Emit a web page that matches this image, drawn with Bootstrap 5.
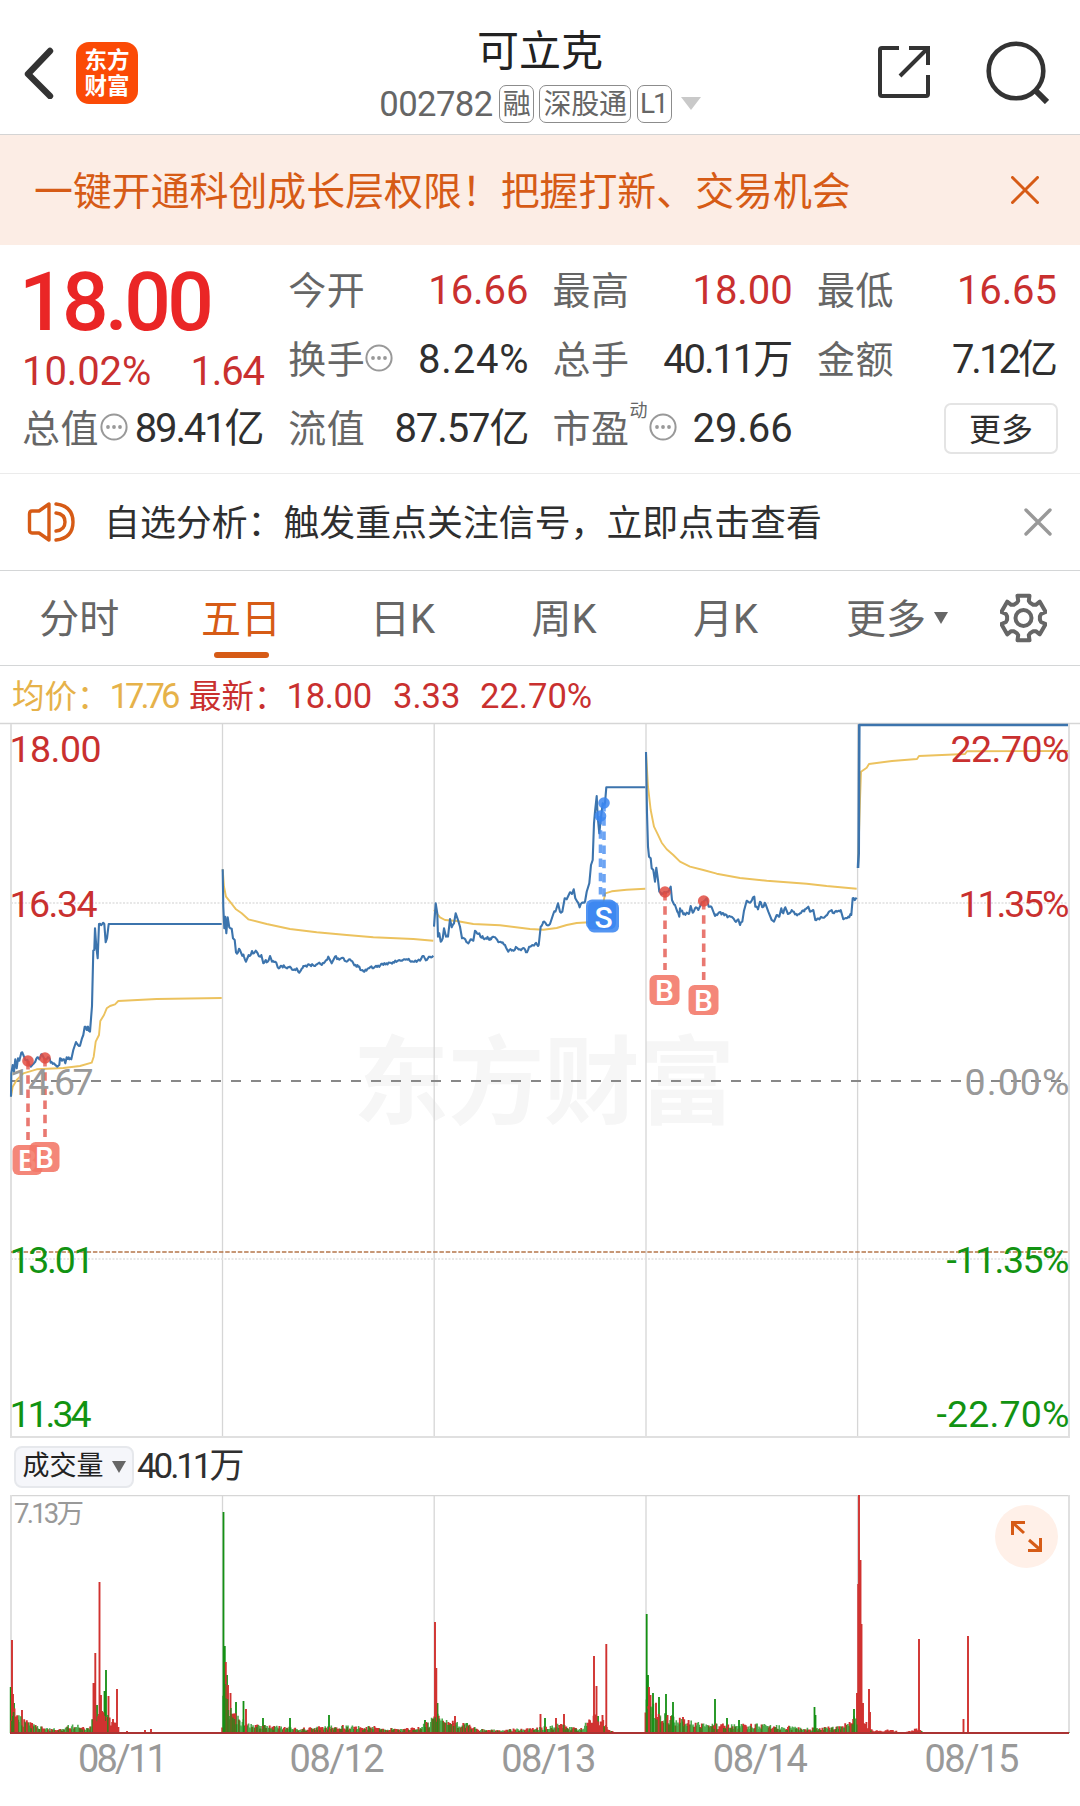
<!DOCTYPE html>
<html lang="zh-CN">
<head>
<meta charset="utf-8">
<meta name="viewport" content="width=device-width, initial-scale=1">
<title>可立克 002782</title>
<link href="https://cdn.jsdelivr.net/npm/bootstrap@5.3.0/dist/css/bootstrap.min.css" rel="stylesheet">
<style>
:root{--ink:#2f2f2f;--grey:#666;--up:#c9302f;--down:#1f8f1c;--brand:#d65b16}
body{width:1080px;height:1806px;overflow:hidden;background:#fff;color:var(--ink);font-family:Roboto,"Noto Sans CJK SC",sans-serif;line-height:1;-webkit-font-smoothing:antialiased}
svg{display:block;flex:none}
.t-nowrap,.t-nowrap *{white-space:nowrap}
.top-bar{height:135px;border-bottom:1px solid #d4d4d4;padding:0 31px 0 23px}
.side{width:250px}
.logo-tile{width:62px;height:62px;border-radius:13px;background:#fb4a06;color:#fff;font-weight:700;font-size:22.5px;line-height:26px;margin-left:22px}
.stock-name{font-size:42px;color:#222;line-height:50px;margin-top:27px}
.stock-code{font-size:34.7px;color:var(--grey);letter-spacing:-.6px;height:38px;margin-top:8px;gap:6px}
.tag-box{height:38px;border:1.5px solid #8c8c8c;border-radius:7px;font-size:28px;letter-spacing:-.2px;padding:1px 3px 0;color:var(--grey)}
.tag-box.tag-l1{letter-spacing:-2px;padding:0 4px 0 2px}
.promo{height:110px;background:#fcede5;color:var(--brand);font-size:38.9px;padding:0 41px 0 34px}
.cn-drop{padding-top:4px}
.quote{height:229px;border-bottom:1px solid #ebebeb;padding:11px 24px 0;display:grid;grid-template-columns:repeat(4,240px);grid-template-rows:repeat(3,69px);column-gap:24.3px;font-size:40px}
.head-price{grid-row:1/3}
.col-start{margin-left:-2px}
.big-price{font-size:82px;font-weight:500;color:#ea2626;letter-spacing:-3.6px;line-height:88px;margin-top:2px;margin-left:-5px}
.quote .lbl{font-size:38px;color:var(--grey);letter-spacing:.5px}
.val{letter-spacing:-.1px}
.val.tight1{letter-spacing:-1.1px}
.val.tight2{letter-spacing:-2.1px;margin-right:1.5px}
.val.tight3{letter-spacing:-3px;margin-right:2px}
.val.loose{letter-spacing:.8px;margin-right:-1px}
.up{color:var(--up)}
.sup-note{font-size:18px;align-self:flex-start;margin-top:-8px;color:var(--grey)}
.more-btn{width:114px;height:51px;border:2px solid #e4e4e4;border-radius:7px;font-size:32px;color:var(--ink);padding-top:2px;margin-right:-1px}
.notice{height:97px;border-bottom:1px solid #d4d6d7;font-size:35.9px;padding:0 28px 0 27px}
.period{height:95px;border-bottom:1px solid #d4d6d7;font-size:40px;color:var(--grey);padding:0 33px 0 0}
.period .nav-item{width:161.6px;height:95px;position:relative;padding:4px 3px 0 0}
.period .on{color:var(--brand)}
.period .on::after{content:"";position:absolute;left:52px;bottom:8px;width:55px;height:6px;border-radius:3px;background:var(--brand)}
.legend-row{height:56px;font-size:34.6px;padding:4px 0 0 12px}
.legend-row .cn{font-size:32.5px}
.vol-head{height:57px;padding-left:14px;font-size:35px}
.vol-pill{width:120px;height:42px;border:2px solid #e6e8ec;border-radius:8px;background:#f5f6fa;font-size:27px;color:#222}
.dates{height:50px;padding:0 11px;font-size:38px;color:#999}
.dates div{width:211.6px;padding-left:67px;letter-spacing:-1.5px}
.dates div:first-child{letter-spacing:-2.8px}
</style>
</head>
<body class="t-nowrap">
<header class="top-bar d-flex justify-content-between">
  <div class="side d-flex align-items-center" style="padding-top:11px">
    <svg width="31" height="52" viewBox="0 0 31 52" fill="none" stroke="#333" stroke-width="6.4" stroke-linecap="round" stroke-linejoin="round"><path d="M27 4 5 27 27 49"/></svg>
    <div class="logo-tile d-flex flex-column align-items-center justify-content-center"><span>东方</span><span>财富</span></div>
  </div>
  <div class="d-flex flex-column align-items-center" style="padding-left:8px">
    <div class="stock-name">可立克</div>
    <div class="stock-code d-flex align-items-center"><span>002782</span><span class="tag-box d-flex align-items-center">融</span><span class="tag-box d-flex align-items-center" style="margin-left:-1px">深股通</span><span class="tag-box tag-l1 d-flex align-items-center">L1</span>
      <svg style="margin-left:3px" width="20" height="14"><path d="M0 0H20L10 13z" fill="#c9c9c9"/></svg></div>
  </div>
  <div class="side d-flex align-items-center justify-content-end" style="padding-top:10px">
    <svg width="54" height="54" viewBox="0 0 54 54" fill="none" stroke="#333" stroke-width="4"><path d="M22 3H5Q3 3 3 5V49Q3 51 5 51H49Q51 51 51 49V30M32 3H51V20M51 3 23 31"/></svg>
    <svg style="margin-left:55px" width="63" height="63" viewBox="0 0 63 63" fill="none" stroke="#333" stroke-width="4.6"><circle cx="30" cy="30" r="27.3"/><path d="M49 49 61 61" stroke-width="6"/></svg>
  </div>
</header>

<section class="promo d-flex align-items-center justify-content-between">
  <span class="cn-drop">一键开通科创成长层权限！把握打新、交易机会</span>
  <svg width="28" height="28" stroke="#d65b16" stroke-width="3" stroke-linecap="round"><path d="M1.5 1.5 26.5 26.5M26.5 1.5 1.5 26.5"/></svg>
</section>

<section class="quote">
  <div class="head-price">
    <div class="big-price">18.00</div>
    <div class="d-flex justify-content-between up col-start" style="margin-top:6px"><span class="val">10.02%</span><span class="val tight1">1.64</span></div>
  </div>
  <div class="d-flex align-items-center justify-content-between"><span class="lbl">今开</span><span class="val up">16.66</span></div>
  <div class="d-flex align-items-center justify-content-between"><span class="lbl">最高</span><span class="val up">18.00</span></div>
  <div class="d-flex align-items-center justify-content-between"><span class="lbl">最低</span><span class="val up">16.65</span></div>
  <div class="d-flex align-items-center justify-content-between"><span class="d-flex align-items-center"><span class="lbl">换手</span><svg width="28" height="28" class="mb-1"><use href="#dots"/></svg></span><span class="val loose">8.24%</span></div>
  <div class="d-flex align-items-center justify-content-between"><span class="lbl">总手</span><span class="val tight2">40.11万</span></div>
  <div class="d-flex align-items-center justify-content-between"><span class="lbl">金额</span><span class="val tight3">7.12亿</span></div>
  <div class="d-flex align-items-center justify-content-between col-start"><span class="d-flex align-items-center"><span class="lbl">总值</span><svg width="28" height="28" class="mb-1" style="margin-left:1px"><use href="#dots"/></svg></span><span class="val tight2">89.41亿</span></div>
  <div class="d-flex align-items-center justify-content-between"><span class="lbl">流值</span><span class="val tight1">87.57亿</span></div>
  <div class="d-flex align-items-center justify-content-between"><span class="d-flex align-items-center"><span class="lbl">市盈</span><span class="sup-note">动</span><svg width="28" height="28" class="mb-1" style="margin-left:1px"><use href="#dots"/></svg></span><span class="val">29.66</span></div>
  <div class="d-flex align-items-center justify-content-end"><div class="more-btn d-flex align-items-center justify-content-center">更多</div></div>
</section>

<section class="notice d-flex align-items-center">
  <svg width="48" height="42" viewBox="0 0 48 42" fill="none" stroke="#d65b16" stroke-width="3.4" stroke-linejoin="round" stroke-linecap="round"><path d="M22 3V39L12 32H5Q2.5 32 2.5 29V13Q2.5 10 5 10H12ZM29 12Q38 13 38 21T29 30M29 3Q46 5 46 21T29 39"/></svg>
  <span style="margin-left:29px;padding-top:6px">自选分析：触发重点关注信号，立即点击查看</span>
  <svg class="ms-auto" width="28" height="28" stroke="#999" stroke-width="3.4" stroke-linecap="round"><path d="M2 2 26 26M26 2 2 26"/></svg>
</section>

<nav class="period nav d-flex align-items-center flex-nowrap">
  <div class="nav-item d-flex align-items-center justify-content-center">分时</div>
  <div class="nav-item on d-flex align-items-center justify-content-center">五日</div>
  <div class="nav-item d-flex align-items-center justify-content-center">日K</div>
  <div class="nav-item d-flex align-items-center justify-content-center">周K</div>
  <div class="nav-item d-flex align-items-center justify-content-center">月K</div>
  <div class="d-flex align-items-center" style="margin-left:38px"><span class="cn-drop">更多</span><svg style="margin-left:8px" width="14" height="12"><path d="M0 0H14L7 12z" fill="#666"/></svg></div>
  <svg class="ms-auto" width="47" height="50" viewBox="-23.5 -25 47 50" fill="none" stroke="#666" stroke-width="4"><path id="gear" stroke-linejoin="round"/><circle r="8"/></svg>
</nav>

<div class="legend-row d-flex align-items-center">
  <span style="color:#e6b24a;width:177px"><span class="cn">均价：</span><span style="letter-spacing:-4px">17.76</span></span>
  <span class="up" style="width:204px"><span class="cn">最新：</span><span style="letter-spacing:-.3px">18.00</span></span>
  <span class="up" style="width:87px">3.33</span>
  <span class="up">22.70%</span>
</div>

<svg id="price" width="1080" height="716" viewBox="0 722 1080 716" font-size="37.5">
  <defs>
    <g id="dots"><circle cx="14" cy="14" r="12.6" fill="none" stroke="#999" stroke-width="2"/><g fill="#999"><circle cx="8" cy="14" r="1.9"/><circle cx="14" cy="14" r="1.9"/><circle cx="20" cy="14" r="1.9"/></g></g>
  </defs>
  <text x="353" y="1116" font-size="96" font-weight="700" textLength="382" fill="#f6f6f6">东方财富</text>
  <g stroke="#d6d6d6" stroke-width="1.3" fill="none">
    <path d="M0 723.500H1080M222.5 724V1437M434.2 724V1437M646 724V1437M857.6 724V1437"/>
    <path d="M11 724V1437H1069V724" stroke="#e0e0e0" stroke-width="2"/>
    <path d="M11 903H1069M11 1259H1069" stroke="#e0e0e0" stroke-dasharray="2 1.5"/>
  </g>
  <path d="M11 1081H1069" stroke="#888" stroke-width="2" stroke-dasharray="10 10"/>
  <path d="M11 1252H1069" stroke="#b5764a" stroke-width="1.3" stroke-dasharray="4.5 1.8"/>
  <g id="lines" fill="none" stroke-linejoin="round"></g>
  <g id="marks"></g>
  <g id="axis"></g>
</svg>

<div class="vol-head d-flex align-items-center">
  <div class="vol-pill d-flex align-items-center justify-content-center">成交量<svg style="margin-left:8px" width="14" height="12"><path d="M0 0H14L7 12z" fill="#666"/></svg></div>
  <span style="margin-left:3px;letter-spacing:-3.1px">40.11万</span>
</div>

<svg id="volume" width="1080" height="239" viewBox="0 1495 1080 239">
  <path d="M222.5 1495V1733M434.2 1495V1733M646 1495V1733M857.6 1495V1733M11 1495.6H1069" stroke="#d6d6d6" stroke-width="1.3"/>
  <path d="M11 1495V1733M1069 1495V1733" stroke="#e0e0e0" stroke-width="2"/>
  <text x="14" y="1522.500" font-size="27.500" textLength="70" fill="#999">7.13万</text>
  <g id="bars"></g>
  <path d="M10 1733H1069" stroke="#a33" stroke-width="2"/>
  <circle cx="1026.500" cy="1536.500" r="31.500" fill="#fff0e8"/>
  <path d="M1024 1533 1012.500 1522.500M1012.500 1535V1522.500H1025M1029 1540 1040.500 1550M1040.500 1538V1550.500H1028" fill="none" stroke="#d65b16" stroke-width="3"/>
</svg>
<div class="dates d-flex align-items-center"></div>

<script src="https://cdn.jsdelivr.net/npm/bootstrap@5.3.0/dist/js/bootstrap.bundle.min.js"></script>
<script>
let seed = 11;
const rnd = () => (seed = (seed * 16807) % 2147483647) / 2147483647;
const $ = id => document.getElementById(id);

// Settings gear: six teeth around a ring
let d = '';
for (let i = 0; i < 6; i++) {
  const a = -90 + i * 60;
  [[-24, 16.5], [-17, 18], [-15, 23], [15, 23], [17, 18], [24, 16.5]].forEach(([o, r]) => {
    const t = (a + o) * Math.PI / 180;
    d += (d ? 'L' : 'M') + (r * Math.cos(t)).toFixed(1) + ' ' + (r * Math.sin(t)).toFixed(1);
  });
}
$('gear').setAttribute('d', d + 'Z');

// Series points are in thirds of a pixel; ox is the panel's left offset
const series = [
 [0,'y','33,1130 38,1100 50,1080 70,1060 110,1048 190,1044 240,1038 275,1028 281,1010 287,965 297,945 301,903 312,885 320,865 330,858 345,853 355,843 470,837 665,834'],
 [0,'b','33,1130 34,1060 38,1035 42,1055 46,1018 50,1045 54,1015 58,1022 64,998 70,1005 76,1020 84,1025 92,1040 100,1032 106,1025 112,1012 118,1018 124,1003 134,1018 146,1012 152,1028 162,1030 172,1040 178,1035 180,1015 186,1022 192,1018 196,1030 200,1012 208,1018 214,1018 220,990 228,966 234,975 240,977 246,955 250,945 254,920 260,930 264,920 266,932 270,935 276,858 280,692 283,690 285,625 289,680 293,715 297,612 313,612 317,667 321,655 326,612 665,612'],
 [0,'y','668,448 672,500 678,530 690,545 708,568 725,580 745,598 800,612 870,627 950,637 1040,645 1120,652 1240,657 1300,662'],
 [0,'b','668,448 670,560 673,625 676,590 679,640 683,592 688,622 695,626 699,655 704,660 708,697 714,697 717,686 724,700 732,710 738,725 746,705 752,705 756,693 762,700 767,692 776,708 784,705 790,730 797,720 803,725 810,708 816,725 826,725 833,742 845,738 855,742 870,740 880,750 890,745 895,755 902,752 910,738 920,740 930,735 945,738 955,730 965,735 975,725 985,710 995,730 1005,710 1015,715 1028,713 1040,725 1050,718 1060,730 1075,740 1090,754 1105,745 1125,740 1150,735 1170,728 1200,722 1220,718 1240,725 1260,722 1268,708 1280,720 1290,710 1300,707'],
 [420,'y','42,570 60,592 75,600 110,603 160,612 240,616 330,627 370,629 410,624 440,615 470,609 520,606 545,570 556,520 575,514 620,509 676,506'],
 [420,'b','42,620 47,550 52,580 54,650 58,640 62,665 68,655 72,625 78,650 84,650 90,597 95,622 102,610 107,580 114,600 120,620 126,655 136,658 145,670 152,658 160,662 165,632 175,642 190,655 210,655 225,652 232,660 245,668 255,675 262,690 275,692 290,683 300,688 312,685 318,697 330,680 345,672 356,675 362,620 370,605 380,615 390,612 400,582 408,570 414,550 420,575 427,575 434,535 440,538 450,517 456,522 461,508 466,535 472,545 479,562 486,548 495,545 500,515 508,490 513,435 518,420 522,310 525,275 530,228 533,290 538,340 542,300 548,250 555,250 559,202 676,202'],
 [420,'y','678,96 684,200 692,270 702,320 712,340 725,368 740,388 760,405 780,425 810,440 850,450 890,461 960,474 1040,482 1160,491 1220,498 1310,506'],
 [420,'b','678,96 681,280 684,380 687,410 692,415 695,445 700,450 705,485 709,443 714,480 718,515 726,520 735,516 745,515 752,500 756,540 765,555 772,575 778,590 780,565 790,583 800,578 808,578 812,558 818,578 825,565 835,570 842,555 852,543 860,535 866,560 875,562 885,588 895,580 910,580 925,590 935,590 945,603 955,598 960,615 967,605 972,572 980,542 990,548 996,540 1003,530 1006,560 1014,568 1020,545 1028,562 1036,550 1045,575 1055,600 1062,605 1070,585 1078,590 1084,565 1090,580 1096,562 1104,582 1115,570 1125,583 1140,580 1155,568 1165,560 1170,575 1180,570 1186,600 1200,595 1215,590 1225,578 1235,570 1242,580 1250,575 1262,570 1270,598 1285,590 1294,585 1298,535 1310,538'],
 [780,'y','234,444 240,240 243,155 260,143 267,132 336,123 411,117 417,108 555,102 561,94 864,93'],
 [780,'b','234,444 236,400 238,15 864,15']
];
$('lines').innerHTML = series.map(([ox, kind, pts], n) => {
  const p = pts.split(' ').map(s => s.split(',').map(Number)), out = [];
  p.forEach(([x, y], i) => {
    out.push([x, y]);
    const q = p[i + 1];
    if (kind === 'b' && q && q[0] - x > 5 && q[0] - x < 40 && Math.abs(q[1] - y) < 20)
      for (let u = x + 3; u < q[0] - 1; u += 3.2) out.push([u, y + (q[1] - y) * (u - x) / (q[0] - x) + (rnd() - .5) * 9]);
  });
  return `<path d="M${out.map(([x, y]) => (ox + x / 3).toFixed(1) + ' ' + (720 + y / 3).toFixed(1)).join('L')}" stroke="${kind === 'b' ? '#3c74ad' : '#ecc25e'}" stroke-width="${kind === 'y' ? 1.9 : n === 9 ? 2.6 : 2.1}"/>`;
}).join('');

// Buy and sell markers: dot, dashed stem, lettered tile
const mark = (x, y, bx, by, c, t, s) =>
  `<path d="M${x} ${y}V${by - 5}" stroke="${c}" stroke-width="3.6" stroke-dasharray="8.500 5.700" opacity=".75"/><circle cx="${x}" cy="${y}" r="5.800" fill="${c}" opacity=".85"/>` +
  `<rect x="${bx}" y="${by}" width="${s}" height="${s}" rx="6" fill="${t === 'B' ? '#f27667' : c}" opacity=".88"/><text x="${bx + s / 2}" y="${by + s / 2 + 10.5}" font-size="30" font-weight="500" fill="#fff" text-anchor="middle">${t}</text>`;
$('marks').innerHTML = mark(28, 1061, 12.5, 1145, '#e24c42', 'B', 30) + mark(45, 1058, 29.5, 1142, '#e24c42', 'B', 30) +
  mark(600.5, 816, 586, 899.5, '#3b86f0', '', 30) + mark(604, 803, 588, 901.5, '#3b86f0', 'S', 31) +
  mark(665, 892, 649.5, 975, '#e24c42', 'B', 30) + mark(703.700, 901, 688.500, 985, '#e24c42', 'B', 30);

const red = '#c9302f', green = '#129312', grey = '#999';
$('axis').innerHTML = [
  ['18.00', '22.70%', 762, red, 92, 119], ['16.34', '11.35%', 917, red, 88, 111], ['14.67', '0.00%', 1095, grey, 84, 105],
  ['13.01', '-11.35%', 1273, green, 85, 123], ['11.34', '-22.70%', 1427, green, 82, 133]
].map(([a, b, y, c, w1, w2]) => `<text x="9.500" y="${y}" fill="${c}" textLength="${w1}">${a}</text><text x="${1069.5 - w2}" y="${y}" fill="${c}" textLength="${w2}">${b}</text>`).join('');

// Volume: an envelope of minute bars, plus the tall individual bars
const env = [[11,28],[15,24],[20,17],[25,13],[35,9],[45,5],[65,4],[67,8],[75,9],[85,6],[91,9],[93,20],[105,22],[112,12],[118,9],[119,1],[222,1],[223,60],[228,36],[233,24],[240,16],[250,10],[265,8],[300,5],[340,8],[370,7],[400,4],[415,6],[430,12],[433,22],[437,26],[445,13],[455,12],[470,8],[480,4],[500,3],[520,5],[540,6],[560,10],[580,4],[588,14],[595,18],[605,14],[609,4],[614,1],[645,1],[646,40],[655,30],[665,20],[675,17],[690,12],[710,10],[730,9],[760,9],[790,7],[820,5],[840,8],[850,11],[857,20],[863,24],[868,8],[874,3],[884,2],[888,5],[900,1],[910,2],[915,5],[921,3],[923,1],[1069,1]];
const spikes = '12,93,r 10.7,46,g 13,39,r 14,30,g 22,23,r 93.5,50,r 95.3,80,r 97,28,g 99.5,151,r 101,38,r 102,22,r 104.5,42,g 106,63,g 108.5,37,r 113,14,r 117,44,r 127,2,r 145,3,r 151,4,r 223.5,221,g 224.8,87,g 225.8,71,r 227,58,g 228,48,r 230.5,40,r 236,31,g 243.5,32,g 246,24,r 263,15,g 290,15,g 329,18,g 425,13,g 435,111,r 436.3,65,r 437.5,30,g 455,17,r 467,10,g 540.5,19,r 545,15,g 556,15,r 564,19,r 594,77,r 596.5,47,r 598,17,g 602.5,18,r 606.3,89,r 646.7,119,g 648,58,g 649,46,r 650.5,38,r 653,40,g 659,36,g 666,39,g 673,31,g 683,16,r 715,34,g 727,15,g 739,13,g 814.5,26,g 815.5,18,g 854,24,g 857,40,r 858.2,149,r 859,240,r 860.5,173,r 861.5,109,r 863,30,r 869,44,r 870,21,r 919,94,r 963.5,14,r 968,97,r';
const paths = { r: '', g: '' };
let tall = '', k = 0;
for (let x = 11; x < 1069; x += .88) {
  while (env[k + 1][0] < x) k++;
  const [x0, h0] = env[k], [x1, h1] = env[k + 1], e = h0 + (h1 - h0) * (x - x0) / (x1 - x0);
  const quiet = (x > 92 && x < 222) || (x > 588 && x < 645) || x > 857;
  const c = rnd() < (quiet ? .93 : x > 646 || x < 300 ? .42 : .5) ? 'r' : 'g';
  paths[c] += `M${x.toFixed(1)} 1733v-${(e <= 1 ? 1 : e * (.4 + .65 * rnd())).toFixed(1)}`;
}
spikes.split(' ').forEach(s => {
  const [x, h, c] = s.split(',');
  if (c === 'g') tall += `M${x} 1733v-${h}`; else paths.r += `M${x} 1733v-${h}`;
});
$('bars').innerHTML = `<path d="${tall}" stroke="#149014" stroke-width="1.800"/><path d="${paths.r}" stroke="#d03230" stroke-width="1.900"/><path d="${paths.g}" stroke="#149014" stroke-width="1.600" opacity=".75"/>`;

document.querySelector('.dates').innerHTML = ['08/11', '08/12', '08/13', '08/14', '08/15'].map(t => `<div>${t}</div>`).join('');
</script>
</body>
</html>
